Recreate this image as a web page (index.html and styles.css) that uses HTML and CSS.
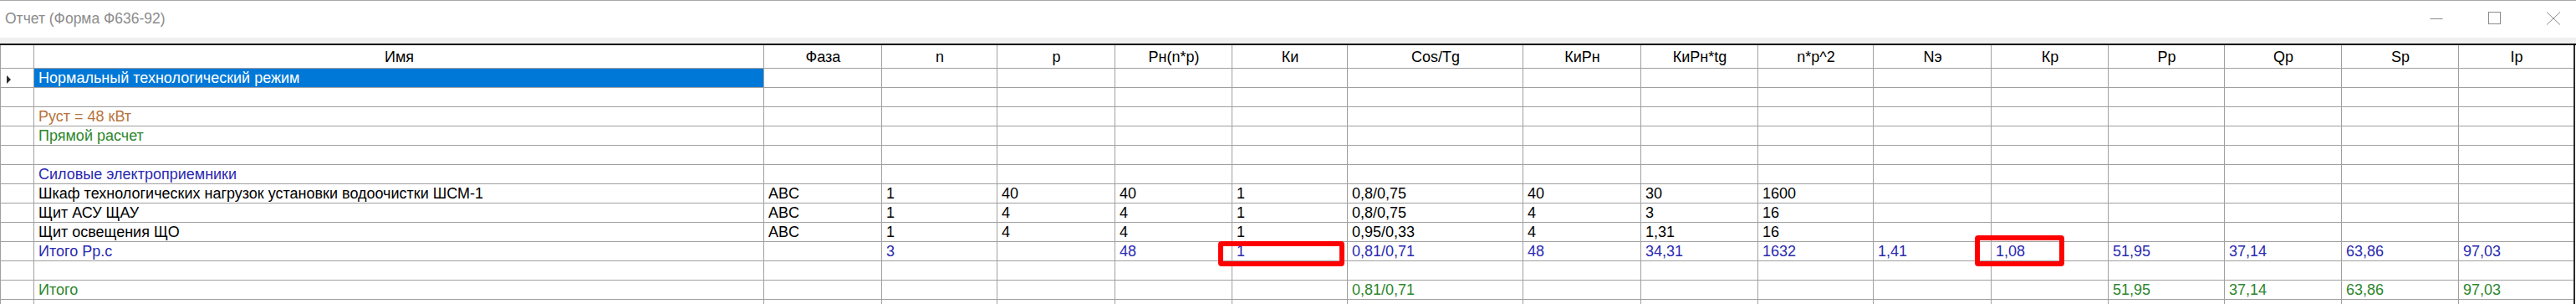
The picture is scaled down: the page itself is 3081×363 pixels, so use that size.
FILE: index.html
```html
<!DOCTYPE html>
<html lang="ru">
<head>
<meta charset="utf-8">
<title>Отчет (Форма Ф636-92)</title>
<link rel="stylesheet" href="styles.css">
</head>
<body>
<div class="window">
  <div class="titlebar">
    <div class="title">Отчет (Форма Ф636-92)</div>
    <div class="buttons">
      <div class="btn"><svg width="16" height="16" viewBox="0 0 16 16"><line x1="0.5" y1="8.5" x2="15.5" y2="8.5" stroke="#8a8a8a" stroke-width="1"/></svg></div>
      <div class="btn"><svg width="16" height="16" viewBox="0 0 16 16"><rect x="0.5" y="0.5" width="14" height="14" fill="none" stroke="#8a8a8a" stroke-width="1"/></svg></div>
      <div class="btn"><svg width="18" height="16" viewBox="0 0 18 16"><path d="M1 0.5 L17 15.5 M17 0.5 L1 15.5" stroke="#8a8a8a" stroke-width="1" fill="none"/></svg></div>
    </div>
  </div>
  <div class="band"></div>
  <div class="gridwrap">
    <div class="grid">
      <!-- header -->
      <div class="c hd"></div>
      <div class="c hd">Имя</div>
      <div class="c hd">Фаза</div>
      <div class="c hd">n</div>
      <div class="c hd">p</div>
      <div class="c hd">Рн(n*p)</div>
      <div class="c hd">Ки</div>
      <div class="c hd">Cos/Tg</div>
      <div class="c hd">КиРн</div>
      <div class="c hd">КиРн*tg</div>
      <div class="c hd">n*p^2</div>
      <div class="c hd">Nэ</div>
      <div class="c hd">Кр</div>
      <div class="c hd">Рр</div>
      <div class="c hd">Qp</div>
      <div class="c hd">Sp</div>
      <div class="c hd">Ip</div>
      <!-- row 1 -->
      <div class="c rh"><span class="arrow"></span></div>
      <div class="c sel">Нормальный технологический режим</div>
      <div class="c"></div><div class="c"></div><div class="c"></div><div class="c"></div><div class="c"></div>
      <div class="c"></div><div class="c"></div><div class="c"></div><div class="c"></div><div class="c"></div>
      <div class="c"></div><div class="c"></div><div class="c"></div><div class="c"></div><div class="c"></div>
      <!-- row 2 -->
      <div class="c rh"></div>
      <div class="c"></div>
      <div class="c"></div><div class="c"></div><div class="c"></div><div class="c"></div><div class="c"></div>
      <div class="c"></div><div class="c"></div><div class="c"></div><div class="c"></div><div class="c"></div>
      <div class="c"></div><div class="c"></div><div class="c"></div><div class="c"></div><div class="c"></div>
      <!-- row 3 -->
      <div class="c rh"></div>
      <div class="c brown">Руст = 48 кВт</div>
      <div class="c"></div><div class="c"></div><div class="c"></div><div class="c"></div><div class="c"></div>
      <div class="c"></div><div class="c"></div><div class="c"></div><div class="c"></div><div class="c"></div>
      <div class="c"></div><div class="c"></div><div class="c"></div><div class="c"></div><div class="c"></div>
      <!-- row 4 -->
      <div class="c rh"></div>
      <div class="c green">Прямой расчет</div>
      <div class="c"></div><div class="c"></div><div class="c"></div><div class="c"></div><div class="c"></div>
      <div class="c"></div><div class="c"></div><div class="c"></div><div class="c"></div><div class="c"></div>
      <div class="c"></div><div class="c"></div><div class="c"></div><div class="c"></div><div class="c"></div>
      <!-- row 5 -->
      <div class="c rh"></div>
      <div class="c"></div>
      <div class="c"></div><div class="c"></div><div class="c"></div><div class="c"></div><div class="c"></div>
      <div class="c"></div><div class="c"></div><div class="c"></div><div class="c"></div><div class="c"></div>
      <div class="c"></div><div class="c"></div><div class="c"></div><div class="c"></div><div class="c"></div>
      <!-- row 6 -->
      <div class="c rh"></div>
      <div class="c blue">Силовые электроприемники</div>
      <div class="c"></div><div class="c"></div><div class="c"></div><div class="c"></div><div class="c"></div>
      <div class="c"></div><div class="c"></div><div class="c"></div><div class="c"></div><div class="c"></div>
      <div class="c"></div><div class="c"></div><div class="c"></div><div class="c"></div><div class="c"></div>
      <!-- row 7 -->
      <div class="c rh"></div>
      <div class="c">Шкаф технологических нагрузок установки водоочистки ШСМ-1</div>
      <div class="c">ABC</div>
      <div class="c">1</div>
      <div class="c">40</div>
      <div class="c">40</div>
      <div class="c">1</div>
      <div class="c">0,8/0,75</div>
      <div class="c">40</div>
      <div class="c">30</div>
      <div class="c">1600</div>
      <div class="c"></div><div class="c"></div><div class="c"></div><div class="c"></div><div class="c"></div><div class="c"></div>
      <!-- row 8 -->
      <div class="c rh"></div>
      <div class="c">Щит АСУ ЩАУ</div>
      <div class="c">ABC</div>
      <div class="c">1</div>
      <div class="c">4</div>
      <div class="c">4</div>
      <div class="c">1</div>
      <div class="c">0,8/0,75</div>
      <div class="c">4</div>
      <div class="c">3</div>
      <div class="c">16</div>
      <div class="c"></div><div class="c"></div><div class="c"></div><div class="c"></div><div class="c"></div><div class="c"></div>
      <!-- row 9 -->
      <div class="c rh"></div>
      <div class="c">Щит освещения ЩО</div>
      <div class="c">ABC</div>
      <div class="c">1</div>
      <div class="c">4</div>
      <div class="c">4</div>
      <div class="c">1</div>
      <div class="c">0,95/0,33</div>
      <div class="c">4</div>
      <div class="c">1,31</div>
      <div class="c">16</div>
      <div class="c"></div><div class="c"></div><div class="c"></div><div class="c"></div><div class="c"></div><div class="c"></div>
      <!-- row 10 -->
      <div class="c rh"></div>
      <div class="c blue">Итого Рр.с</div>
      <div class="c blue"></div>
      <div class="c blue">3</div>
      <div class="c blue"></div>
      <div class="c blue">48</div>
      <div class="c blue">1</div>
      <div class="c blue">0,81/0,71</div>
      <div class="c blue">48</div>
      <div class="c blue">34,31</div>
      <div class="c blue">1632</div>
      <div class="c blue">1,41</div>
      <div class="c blue">1,08</div>
      <div class="c blue">51,95</div>
      <div class="c blue">37,14</div>
      <div class="c blue">63,86</div>
      <div class="c blue">97,03</div>
      <!-- row 11 -->
      <div class="c rh"></div>
      <div class="c"></div>
      <div class="c"></div><div class="c"></div><div class="c"></div><div class="c"></div><div class="c"></div>
      <div class="c"></div><div class="c"></div><div class="c"></div><div class="c"></div><div class="c"></div>
      <div class="c"></div><div class="c"></div><div class="c"></div><div class="c"></div><div class="c"></div>
      <!-- row 12 -->
      <div class="c rh"></div>
      <div class="c green">Итого</div>
      <div class="c"></div><div class="c"></div><div class="c"></div><div class="c"></div><div class="c"></div>
      <div class="c green">0,81/0,71</div>
      <div class="c"></div><div class="c"></div><div class="c"></div><div class="c"></div><div class="c"></div>
      <div class="c green">51,95</div>
      <div class="c green">37,14</div>
      <div class="c green">63,86</div>
      <div class="c green">97,03</div>
      <!-- row 13 -->
      <div class="c rh"></div>
      <div class="c"></div>
      <div class="c"></div><div class="c"></div><div class="c"></div><div class="c"></div><div class="c"></div>
      <div class="c"></div><div class="c"></div><div class="c"></div><div class="c"></div><div class="c"></div>
      <div class="c"></div><div class="c"></div><div class="c"></div><div class="c"></div><div class="c"></div>
    </div>
    <div class="mark mark-ki"></div>
    <div class="mark mark-kr"></div>
  </div>
</div>
</body>
</html>
```

FILE: styles.css
```css
html, body {
  margin: 0;
  padding: 0;
  background: #ffffff;
}

body {
  width: 3081px;
  height: 363px;
  overflow: hidden;
  font-family: "Liberation Sans", Arial, sans-serif;
}

.window {
  position: relative;
  width: 3081px;
  height: 363px;
  overflow: hidden;
  border-top: 1px solid #a8a8a8;
  box-sizing: border-box;
}

.titlebar {
  height: 44px;
  display: flex;
  align-items: center;
  justify-content: space-between;
  background: #ffffff;
}

.title {
  padding-left: 6px;
  font-size: 17.5px;
  color: #8c8c8c;
  margin-top: -2px;
}

.buttons {
  display: flex;
  margin-right: -8px;
  margin-top: -2px;
}

.btn {
  width: 70px;
  height: 30px;
  display: flex;
  align-items: center;
  justify-content: center;
}

.band {
  height: 7px;
  background: #f0f0f0;
}

.gridwrap {
  position: relative;
  border-top: 2px solid #000000;
}

.grid {
  display: grid;
  grid-template-columns: 39px 872px 140px 137px 140px 139px 137px 209px 140px 139px 137px 140px 139px 138px 139px 139px 137px;
  grid-template-rows: 27px repeat(13, 22px);
  gap: 1px;
  background: #a0a0a0;
  padding-left: 1px;
  box-sizing: border-box;
  border-right: 2px solid #2a2a2a;
  width: 3080px;
}

.c {
  background: #ffffff;
  display: flex;
  align-items: center;
  padding: 0 4px 0 5px;
  font-size: 18px;
  color: #000000;
  white-space: nowrap;
  overflow: hidden;
}

.hd {
  justify-content: center;
  padding-top: 2px;
}

.rh {
  padding-left: 7px;
}

.arrow {
  display: block;
  width: 0;
  height: 0;
  border-left: 5px solid #2b2b2b;
  border-top: 5px solid transparent;
  border-bottom: 5px solid transparent;
  margin-top: 3px;
}

.sel {
  background: #0078d7;
  color: #ffffff;
}

.brown { color: #b8733c; }
.green { color: #2d862d; }
.blue { color: #2a2ab0; }

.mark {
  position: absolute;
  border: 6px solid #ff0000;
  border-radius: 4px;
  box-sizing: border-box;
}

.mark-ki {
  left: 1457px;
  top: 234px;
  width: 151px;
  height: 30px;
}

.mark-kr {
  left: 2362px;
  top: 227px;
  width: 107px;
  height: 37px;
}
```
